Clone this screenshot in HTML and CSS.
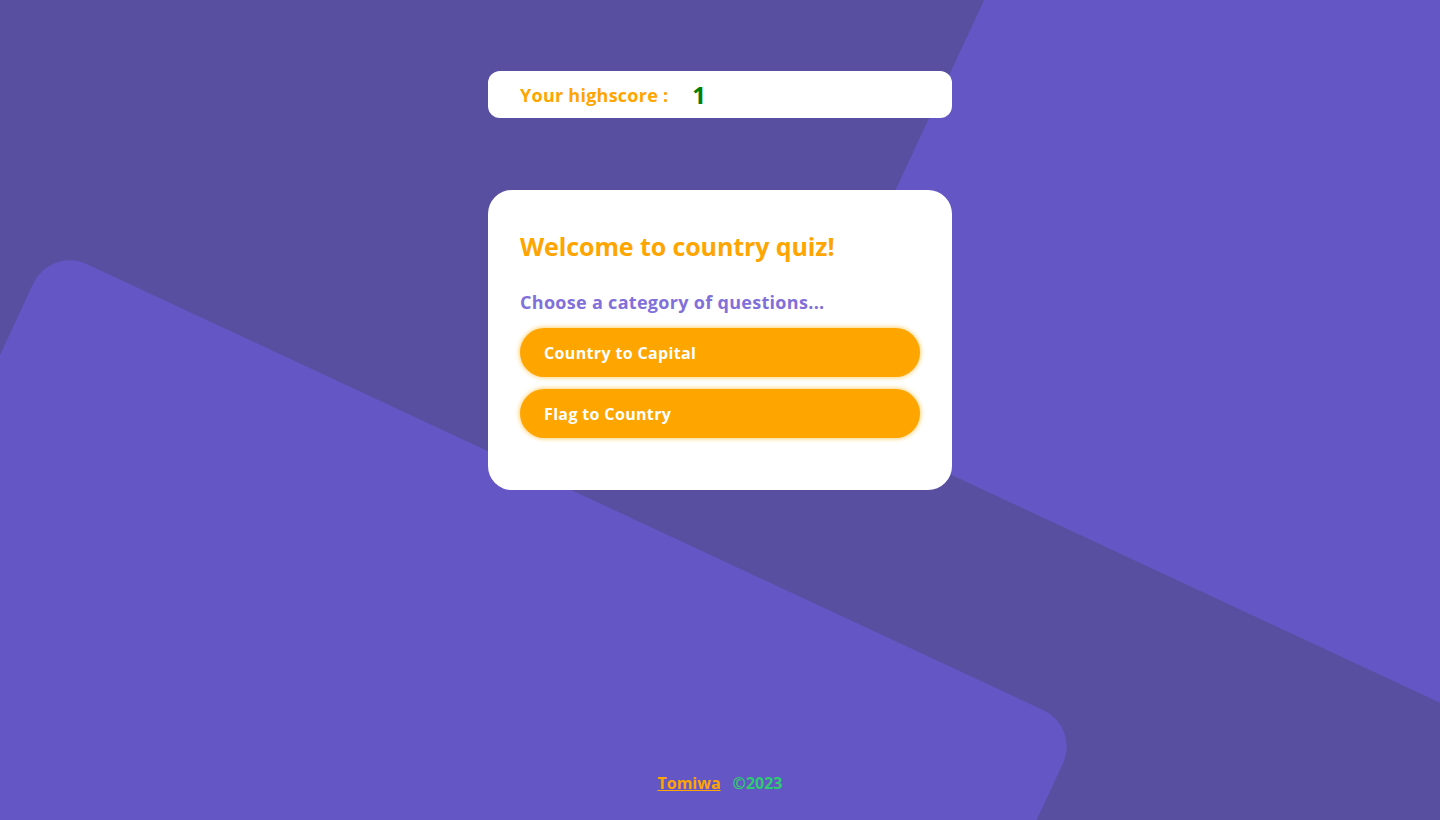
FILE: index.html
```html
<!DOCTYPE html>
<html lang="en">
<head>
<meta charset="utf-8">
<title>Country Quiz</title>
<link rel="stylesheet" href="styles.css">
</head>
<body>
<svg class="backdrop" width="1440" height="820" viewBox="0 0 1440 820" aria-hidden="true">
  <rect class="blob" transform="translate(796.4 402.6) rotate(25)" x="0" y="-2000" width="2000" height="2000" rx="40"/>
  <rect class="blob" transform="translate(50.3 247.1) rotate(25)" x="0" y="0" width="1136" height="1000" rx="40"/>
</svg>
<main class="page">
  <div class="score">
    <span class="score-label">Your highscore :</span>
    <span class="score-value">1</span>
  </div>
  <section class="card">
    <h1 class="title">Welcome to country quiz!</h1>
    <p class="subtitle">Choose a category of questions...</p>
    <div class="options">
      <button class="option">Country to Capital</button>
      <button class="option">Flag to Country</button>
    </div>
  </section>
  <footer class="footer">
    <a class="author" href="#">Tomiwa</a>
    <span class="year">©2023</span>
  </footer>
</main>
</body>
</html>
```
FILE: styles.css
```css
* { box-sizing: border-box; }
html, body {
  margin: 0;
  padding: 0;
  height: 100%;
}
body {
  background: #594fa1;
  font-family: "Open Sans", "DejaVu Sans", sans-serif;
  font-weight: 700;
  overflow: hidden;
  position: relative;
}
.backdrop {
  position: absolute;
  left: 0;
  top: 0;
  z-index: 0;
}
.blob { fill: #6456c4; }
.page {
  position: relative;
  z-index: 1;
  min-height: 820px;
  display: flex;
  flex-direction: column;
  align-items: center;
  padding-top: 71px;
}
.score {
  width: 464px;
  height: 47px;
  background: #fff;
  border-radius: 12px;
  display: flex;
  align-items: center;
  padding: 0 32px;
  gap: 24px;
}
.score-label {
  color: #ffa500;
  font-size: 18px;
  letter-spacing: 0.25px;
}
.score-value {
  color: #008000;
  font-size: 24px;
}
.card {
  margin-top: 72px;
  width: 464px;
  height: 300px;
  background: #fff;
  border-radius: 24px;
  padding: 38px 32px 32px;
}
.title {
  margin: 0;
  color: #ffa500;
  font-size: 25px;
  line-height: 36px;
  letter-spacing: -0.1px;
}
.subtitle {
  margin: 26px 0 0;
  color: #8270da;
  font-size: 18px;
  line-height: 24px;
  letter-spacing: 0.3px;
}
.options {
  margin-top: 14px;
  display: flex;
  flex-direction: column;
  gap: 12px;
}
.option {
  width: 400px;
  height: 49px;
  border: none;
  border-radius: 25px;
  background: #ffa500;
  box-shadow: 0 0 4px 1px #ffd37a;
  color: #fff;
  font-family: inherit;
  font-weight: 700;
  font-size: 16px;
  text-align: left;
  padding: 0 24px;
  letter-spacing: 0.35px;
}
.footer {
  margin-top: auto;
  padding-bottom: 25px;
  display: flex;
  gap: 12px;
  font-size: 16px;
  line-height: 24px;
}
.author {
  color: #ffa500;
  text-decoration: underline;
}
.year { color: #2ecc71; }
```
